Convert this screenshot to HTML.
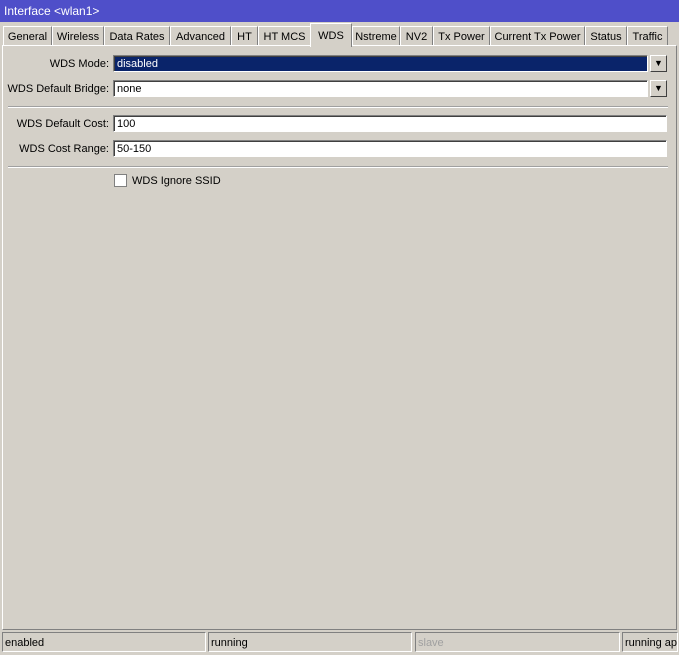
<!DOCTYPE html><html><head><style>
body{margin:0;width:679px;height:655px;background:#d4d0c8;font-family:"Liberation Sans",sans-serif;font-size:11px;position:relative;overflow:hidden;white-space:nowrap}
.a{position:absolute}
.title{left:0;top:0;width:679px;height:22px;background:#4f4fc9;color:#fff;line-height:23px;text-indent:4px;font-size:12px}
.tab{top:26px;height:19px;line-height:20px;text-align:center;border:1px solid #fff;border-right-color:#808080;border-bottom:none;box-sizing:border-box;background:#d4d0c8;overflow:hidden}
.panel{left:2px;top:45px;width:675px;height:585px;border:1px solid #fff;border-right-color:#808080;border-bottom-color:#808080;box-sizing:border-box}
.lbl{right:570px;text-align:right;height:17px;line-height:18px}
.in{left:113px;height:17px;border:1px solid #808080;border-right-color:#fff;border-bottom-color:#fff;box-sizing:border-box;background:#fff;line-height:17px;padding-left:3px;box-shadow:inset 1px 1px 0 #404040}
.btn{left:650px;width:17px;height:17px;border:1px solid #fff;border-right-color:#404040;border-bottom-color:#404040;box-sizing:border-box;font-size:9px;text-align:center;line-height:15px}
.sep{left:8px;width:660px;height:0;border-top:1px solid #a0a0a0;border-bottom:1px solid #fff}
.st{top:632px;height:20px;border:1px solid #808080;border-right-color:#fff;border-bottom-color:#fff;box-sizing:border-box;line-height:20px;padding-left:2px;overflow:hidden}
</style></head><body>
<div class="a title">Interface &lt;wlan1&gt;</div>
<div class="a panel"></div>
<div class="a tab" style="left:3px;width:49px">General</div>
<div class="a tab" style="left:52px;width:52px">Wireless</div>
<div class="a tab" style="left:104px;width:66px">Data Rates</div>
<div class="a tab" style="left:170px;width:61px">Advanced</div>
<div class="a tab" style="left:231px;width:27px">HT</div>
<div class="a tab" style="left:258px;width:53px">HT MCS</div>
<div class="a tab" style="left:310px;width:42px;top:23px;height:24px;line-height:24px;z-index:2">WDS</div>
<div class="a tab" style="left:352px;width:48px">Nstreme</div>
<div class="a tab" style="left:400px;width:33px">NV2</div>
<div class="a tab" style="left:433px;width:57px">Tx Power</div>
<div class="a tab" style="left:490px;width:95px">Current Tx Power</div>
<div class="a tab" style="left:585px;width:42px">Status</div>
<div class="a tab" style="left:627px;width:41px">Traffic</div>
<div class="a lbl" style="top:55px">WDS Mode:</div>
<div class="a in" style="top:55px;width:535px;background:#0a246a;color:#fff">disabled</div>
<div class="a btn" style="top:55px">&#9660;</div>
<div class="a lbl" style="top:80px">WDS Default Bridge:</div>
<div class="a in" style="top:80px;width:535px">none</div>
<div class="a btn" style="top:80px">&#9660;</div>
<div class="a sep" style="top:106px"></div>
<div class="a lbl" style="top:115px">WDS Default Cost:</div>
<div class="a in" style="top:115px;width:554px">100</div>
<div class="a lbl" style="top:140px">WDS Cost Range:</div>
<div class="a in" style="top:140px;width:554px">50-150</div>
<div class="a sep" style="top:166px"></div>
<div class="a" style="left:114px;top:174px;width:13px;height:13px;border:1px solid #808080;box-sizing:border-box;background:#fff"></div>
<div class="a" style="left:132px;top:174px;line-height:15px">WDS Ignore SSID</div>
<div class="a st" style="left:2px;width:204px">enabled</div>
<div class="a st" style="left:208px;width:204px">running</div>
<div class="a st" style="left:415px;width:205px;color:#a0a0a0">slave</div>
<div class="a st" style="left:622px;width:56px">running ap</div>
</body></html>
